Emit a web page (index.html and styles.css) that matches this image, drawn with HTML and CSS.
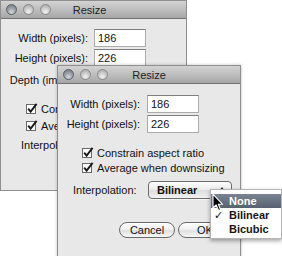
FILE: index.html
```html
<!DOCTYPE html>
<html lang="en">
    <head>
        <title>Resize</title>
        <meta charset="utf-8">
        <meta name="viewport" content="width=device-width, initial-scale=1">
        <link rel="stylesheet" href="styles.css">
    </head>
    <body>
        <div class="desk">
            <!-- back window -->
            <div class="win win-back">
                <div class="titlebar">
                    <span class="lights"><i class="light light-close"></i><i class="light"></i><i class="light"></i></span>
                    <span class="title title-back">Resize</span>
                    <span></span>
                </div>
                <div class="form form-back">
                    <div class="row">
                        <label class="lbl">Width (pixels):</label>
                        <span class="input">186</span>
                    </div>
                    <div class="row row-gap">
                        <label class="lbl">Height (pixels):</label>
                        <span class="input">226</span>
                    </div>
                    <div class="row row-depth">
                        <label class="lbl lbl-depth">Depth (images):</label>
                    </div>
                    <div class="checks checks-back">
                        <div class="check"><svg class="box" width="12" height="11" viewBox="0 0 12 11"><rect x="0.5" y="1.5" width="9" height="9" fill="#fff" stroke="#6a6a6a"/><path d="M2.2 5.6 L4.6 8.6 L10.6 0.8" fill="none" stroke="#1a1a1a" stroke-width="1.9"/></svg><span>Constrain aspect ratio</span></div>
                        <div class="check"><svg class="box" width="12" height="11" viewBox="0 0 12 11"><rect x="0.5" y="1.5" width="9" height="9" fill="#fff" stroke="#6a6a6a"/><path d="M2.2 5.6 L4.6 8.6 L10.6 0.8" fill="none" stroke="#1a1a1a" stroke-width="1.9"/></svg><span>Average when downsizing</span></div>
                    </div>
                    <div class="row row-interp interp-back">
                        <label class="lbl-interp">Interpolation:</label>
                    </div>
                </div>
            </div>

            <!-- front window -->
            <div class="win win-front">
                <div class="titlebar">
                    <span class="lights"><i class="light light-close"></i><i class="light"></i><i class="light"></i></span>
                    <span class="title">Resize</span>
                    <span></span>
                </div>
                <div class="form form-front">
                    <div class="row">
                        <label class="lbl">Width (pixels):</label>
                        <span class="input">186</span>
                    </div>
                    <div class="row row-gap">
                        <label class="lbl">Height (pixels):</label>
                        <span class="input">226</span>
                    </div>
                    <div class="checks checks-front">
                        <div class="check"><svg class="box" width="12" height="11" viewBox="0 0 12 11"><rect x="0.5" y="1.5" width="9" height="9" fill="#fff" stroke="#6a6a6a"/><path d="M2.2 5.6 L4.6 8.6 L10.6 0.8" fill="none" stroke="#1a1a1a" stroke-width="1.9"/></svg><span>Constrain aspect ratio</span></div>
                        <div class="check"><svg class="box" width="12" height="11" viewBox="0 0 12 11"><rect x="0.5" y="1.5" width="9" height="9" fill="#fff" stroke="#6a6a6a"/><path d="M2.2 5.6 L4.6 8.6 L10.6 0.8" fill="none" stroke="#1a1a1a" stroke-width="1.9"/></svg><span>Average when downsizing</span></div>
                    </div>
                    <div class="row row-interp interp-front">
                        <label class="lbl-interp">Interpolation:</label>
                        <div class="popup">
                            <span class="popup-text">Bilinear</span>
                            <span class="popup-arrow"><i class="tri"></i></span>
                        </div>
                    </div>
                    <div class="buttons">
                        <button class="btn btn-cancel">Cancel</button>
                        <button class="btn btn-ok">OK</button>
                    </div>
                </div>
            </div>

            <!-- open popup menu -->
            <div class="menu">
                <div class="item item-hi"><span class="mark"></span>None</div>
                <div class="item"><span class="mark">&#10003;</span>Bilinear</div>
                <div class="item"><span class="mark"></span>Bicubic</div>
            </div>

            <svg class="cursor" width="12" height="19" viewBox="0 0 12 19">
                <path d="M1 1 L1 15 L4.2 12 L6.6 17.6 L8.6 16.7 L6.3 11.3 L10.6 11.3 Z" fill="#000" stroke="#fff" stroke-width="1.1" stroke-linejoin="round"/>
            </svg>
        </div>
    </body>
</html>
```

FILE: styles.css
```css
* {
box-sizing: border-box;
}
body {
margin: 0;
background: #fff;
font: 11px "Liberation Sans", Arial, sans-serif;
color: #111;
overflow: hidden;
}
.desk {
position: relative;
width: 282px;
height: 256px;
overflow: hidden;
}

/* windows */
.win {
position: absolute;
background: #e8e8e8;
border: 1px solid #8e8e8e;
}
.win-back {
left: 0;
top: 0;
width: 187px;
height: 191px;
}
.win-front {
left: 57px;
top: 65px;
width: 184px;
height: 200px;
box-shadow: 0 0 3px rgba(0,0,0,0.25);
}
.titlebar {
height: 18px;
display: grid;
grid-template-columns: 1fr auto 1fr;
align-items: center;
background: linear-gradient(#d3d3d3, #b9b9b9 60%, #a6a6a6);
border-bottom: 1px solid #727272;
}
.lights {
display: flex;
gap: 6px;
padding-left: 5px;
}
.light {
width: 11px;
height: 11px;
border-radius: 50%;
border: 1px solid #8a8a8a;
background: radial-gradient(circle at 50% 75%, #f2f2f2 0, #cdcdcd 45%, #a3a3a3 100%);
}
.light-close {
border-color: #5c6168;
background: radial-gradient(circle at 50% 78%, #d7dbe0 0, #9ea4ab 45%, #6c727a 100%);
}
.title {
color: #222;
font-size: 11px;
}
.title-back {
margin-right: 8px;
}

/* form */
.form-front {
padding-top: 11px;
}
.form-back {
padding-top: 10px;
}
.row {
display: flex;
align-items: center;
height: 18px;
}
.row-gap {
margin-top: 2px;
}
.lbl {
flex: none;
text-align: right;
}
.form-front .lbl {
width: 82px;
margin-right: 7px;
}
.form-back .lbl {
width: 87px;
margin-right: 6px;
}
.lbl-depth {
white-space: nowrap;
}
.row-depth {
margin-top: 4px;
}
.input {
width: 52px;
height: 18px;
background: #fff;
border: 1px solid #ababab;
border-top-color: #7f7f7f;
padding: 0 3px;
line-height: 16px;
}

/* checkboxes */
.checks-front {
margin-top: 12px;
padding-left: 24px;
}
.checks-back {
margin-top: 11px;
padding-left: 25px;
}
.check {
display: flex;
align-items: center;
height: 15px;
white-space: nowrap;
}
.checks-back .check {
height: 17px;
}
.box {
flex: none;
margin-right: 3px;
}

/* interpolation */
.row-interp {
white-space: nowrap;
}
.interp-front {
margin-top: 6px;
padding-left: 15px;
}
.interp-back {
margin-top: 2px;
padding-left: 20px;
}
.interp-front .lbl-interp {
width: 75px;
flex: none;
}
.popup {
width: 84px;
height: 18px;
display: flex;
border: 1px solid #6c6c6c;
border-radius: 4px;
background: linear-gradient(#fdfdfd, #ececec 50%, #dedede 51%, #f1f1f1);
box-shadow: 0 1px 0 rgba(255,255,255,0.6);
}
.popup-text {
flex: 1;
padding-left: 8px;
line-height: 16px;
font-weight: bold;
}
.popup-arrow {
width: 18px;
display: flex;
align-items: center;
justify-content: center;
}
.tri {
width: 0;
height: 0;
border-left: 3px solid transparent;
border-right: 3px solid transparent;
border-bottom: 4px solid #2a2a2a;
margin-bottom: 2px;
}

/* buttons */
.buttons {
display: flex;
gap: 3px;
margin-top: 23px;
padding-left: 61px;
}
.btn {
height: 16px;
padding: 0;
border: 1px solid #6a6a6a;
border-radius: 8px;
background: linear-gradient(#ffffff, #f1f1f1 45%, #e0e0e0 55%, #f6f6f6);
font: 11px "Liberation Sans", Arial, sans-serif;
color: #111;
line-height: 14px;
}
.btn-cancel {
width: 56px;
}
.btn-ok {
width: 54px;
}

/* menu */
.menu {
position: absolute;
left: 210px;
top: 189px;
width: 72px;
padding: 4px 0 2px;
background: rgba(255,255,255,0.97);
border: 1px solid #b4b4b4;
box-shadow: 0 2px 4px rgba(0,0,0,0.35);
}
.item {
display: flex;
height: 14px;
line-height: 14px;
padding-left: 3px;
font-weight: bold;
color: #151515;
}
.item-hi {
background: linear-gradient(#7a8392, #58616f);
color: #fff;
}
.mark {
width: 15px;
flex: none;
font-weight: normal;
}
.cursor {
position: absolute;
left: 212px;
top: 193px;
}
```
